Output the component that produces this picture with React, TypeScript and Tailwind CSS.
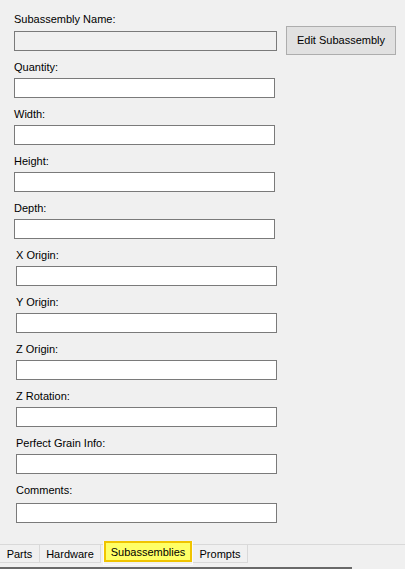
import React from "react";

const font = { fontFamily: '"Liberation Sans", Arial, sans-serif' };

function Field({ label, wide, labelGap = "mb-[4px]" }: { label: string; wide?: boolean; labelGap?: string }) {
  return (
    <div className="flex flex-col">
      <div className={`h-[13px] text-[11px] leading-[13px] text-black ${labelGap}`}>{label}</div>
      <div className={`h-[20px] ${wide ? "w-[263px]" : "w-[261px]"} border border-[#7a7a7a] bg-white`} />
    </div>
  );
}

export default function App() {
  return (
    <div className="w-[405px] h-[569px] bg-[#f0f0f0] flex flex-col overflow-hidden" style={font}>
      <div className="flex flex-col gap-[10px] pl-[14px] pt-[13px]">
        <div className="flex flex-row items-start">
          <div className="flex flex-col">
            <div className="h-[13px] text-[11px] leading-[13px] text-black mb-[5px]">Subassembly Name:</div>
            <div className="h-[20px] w-[263px] border border-[#7a7a7a] bg-[#f0f0f0]" />
          </div>
          <div className="ml-[9px] mt-[13px] -mb-[4px] h-[29px] w-[110px] border border-[#adadad] bg-[#e1e1e1] flex items-center justify-center text-[11px] text-black">
            Edit Subassembly
          </div>
        </div>
        <Field label="Quantity:" />
        <Field label="Width:" />
        <Field label="Height:" />
        <Field label="Depth:" />
      </div>
      <div className="flex flex-col gap-[10px] pl-[16px] pt-[10px]">
        <Field label="X Origin:" />
        <Field label="Y Origin:" />
        <Field label="Z Origin:" />
        <Field label="Z Rotation:" />
        <Field label="Perfect Grain Info:" />
        <Field label="Comments:" labelGap="mb-[6px]" />
      </div>
      <div className="mt-[21px] border-t border-[#d9d9d9] flex flex-row items-start h-[23px] text-[11px] text-black">
        <div className="h-[18px] w-[40px] border-r border-b border-[#d9d9d9] flex items-center justify-center pt-[1px]">Parts</div>
        <div className="h-[18px] w-[61px] border-r border-b border-[#d9d9d9] flex items-center justify-center pt-[1px]">Hardware</div>
        <div className="ml-[2px] -mt-[4px] h-[24px] w-[90px] border-x border-b border-[#fafafa]">
          <div className="h-[21px] w-full border-2 border-[#f0c400] bg-[#ffff66] flex items-center justify-center pt-[1px]">Subassemblies</div>
        </div>
        <div className="h-[18px] w-[55px] border-r border-b border-[#d9d9d9] flex items-center justify-center pt-[1px]">Prompts</div>
      </div>
      <div className="h-[2px] w-[352px] bg-[#696969]" />
    </div>
  );
}
